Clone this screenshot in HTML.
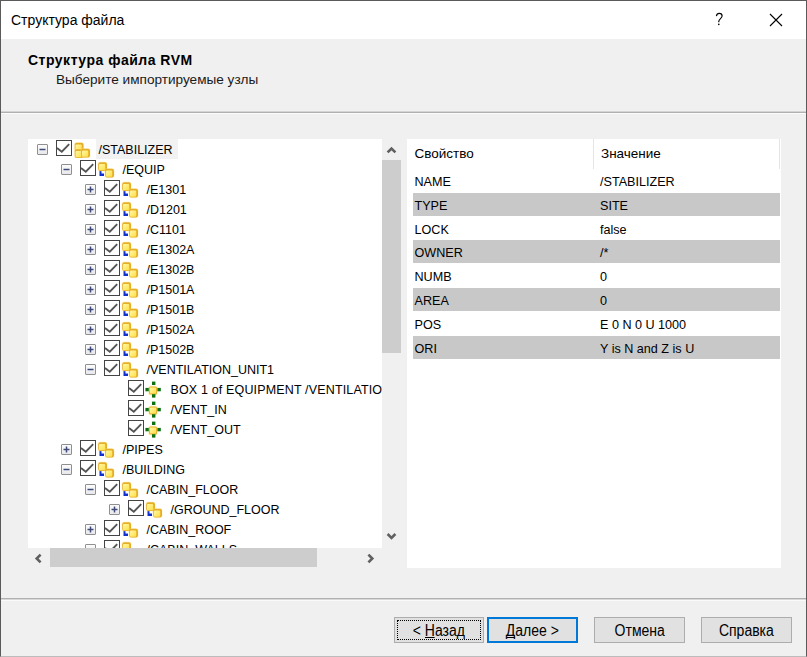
<!DOCTYPE html>
<html><head><meta charset="utf-8"><style>
*{margin:0;padding:0;box-sizing:border-box}
html,body{width:807px;height:657px;overflow:hidden;background:#f0f0f0;font-family:"Liberation Sans",sans-serif;color:#000}
.win{position:absolute;left:0;top:0;width:807px;height:657px;border:1px solid #5a5a5a;border-bottom-color:#bcbcbc;background:#f0f0f0}
.titlebar{position:absolute;left:1px;top:1px;width:805px;height:38px;background:#fff}
.title{position:absolute;left:11px;top:12px;font-size:14px;line-height:17px;color:#000}
.help{position:absolute;left:714px;top:10px;font-size:15px;line-height:18px}
.close{position:absolute;left:769px;top:13px}
.hdr{position:absolute;left:1px;top:39px;width:805px;height:72px;background:#f0f0f0}
.h1{position:absolute;left:28px;top:51.7px;font-size:14px;font-weight:bold;letter-spacing:0.5px;line-height:17px}
.h2{position:absolute;left:56px;top:71px;font-size:13.6px;line-height:17px;color:#1a1a1a}
.sep1{position:absolute;left:1px;top:111px;width:805px;height:2px;background:linear-gradient(#d4d4d4 0 50%,#b0b0b0 50%)}
.sep1b{position:absolute;left:1px;top:113px;width:805px;height:1px;background:#fcfcfc}
.tree{position:absolute;left:28px;top:139px;width:354px;height:409px;background:#fff;overflow:hidden}
.row{position:absolute;left:0;height:20px;width:600px}
.exp{position:absolute;top:5px;width:11px;height:11px;border:1px solid #8f8f8f;border-radius:1px;background:linear-gradient(#fcfcfc,#e8e8ec)}
.exp span{position:absolute;left:1.5px;top:3.75px;width:6px;height:1.5px;background:#3e4b78}
.exp span.pl::after{content:"";position:absolute;left:2.25px;top:-2.25px;width:1.5px;height:6px;background:#3e4b78}
.cb{position:absolute;top:1px;width:16px;height:16px;border:1.6px solid #444;background:#fff}
.cb svg{position:absolute;left:-1.6px;top:-1.6px}
.icw{position:absolute;top:1px;width:18px;height:18px}
.ic{display:block}
.tx{position:absolute;top:0;height:20px;line-height:22px;font-size:12.5px;white-space:nowrap;padding:0 3px;margin-left:-3px}
.tx.sel{background:#f2f2f2;padding-right:5px}
.vsb{position:absolute;left:382px;top:139px;width:25px;height:429px;background:#f0f0f0}
.vthumb{position:absolute;left:0;top:21px;width:19px;height:193px;background:#cdcdcd}
.hsb{position:absolute;left:28px;top:548px;width:354px;height:20px;background:#f0f0f0}
.hthumb{position:absolute;left:22px;top:0;width:267px;height:19px;background:#cdcdcd}
.arr{position:absolute}
.pg{position:absolute;left:407px;top:139px;width:374px;height:429px;background:#fff;overflow:hidden}
.phdr{position:absolute;left:0;top:0;width:374px;height:30px}
.phdr span{position:absolute;top:6px;font-size:13.5px;line-height:17px}
.psep{position:absolute;top:0;width:1px;height:30px;background:#e5e5e5}
.prow{position:absolute;left:6px;width:367px;height:23px;font-size:12.6px;line-height:23px}
.prow.g{background:#c8c8c8}
.prow .k{position:absolute;left:1.5px;top:2px}
.prow .v{position:absolute;left:187px;top:2px}
.sep2{position:absolute;left:1px;top:598px;width:805px;height:2px;background:linear-gradient(#b0b0b0 0 50%,#d8d8d8 50%)}
.sep2b{position:absolute;left:1px;top:600px;width:805px;height:1px;background:#fafafa}
.btn{position:absolute;top:617px;height:26px;border:1px solid #adadad;background:#e1e1e1;font-size:16px;line-height:25px;text-align:center;color:#000}
.btn b{font-weight:normal;display:inline-block;transform:scaleX(0.875)}
.btn.def{border:2px solid #0078d7;line-height:23px}
.focus{position:absolute;left:2px;top:2px;right:2px;bottom:2px;border:1px dotted #000}
u{text-decoration:none;position:relative}
u::after{content:"";position:absolute;left:0.5px;right:0.5px;top:15px;height:1.2px;background:#000}
</style></head><body>
<svg width="0" height="0" style="position:absolute"><defs><linearGradient id="cg" x1="0" y1="0" x2="1" y2="1"><stop offset="0" stop-color="#fff8a8"/><stop offset="1" stop-color="#ffdf45"/></linearGradient></defs></svg>
<div class="win">
</div>
<div class="titlebar"></div>
<div class="title">Структура файла</div>
<svg style="position:absolute;left:712px;top:10px" width="14" height="18" viewBox="0 0 14 18"><path d="M4.4 6.1 C4.7 4.1 5.9 3.4 7.3 3.4 C9 3.4 10.1 4.5 10.1 6.1 C10.1 8.2 6.9 9 6.8 11.3 L6.8 12.3" fill="none" stroke="#000" stroke-width="1.15"/><circle cx="6.8" cy="14.4" r="0.8" fill="#000"/></svg>
<svg class="close" width="14" height="14" viewBox="0 0 14 14" style="position:absolute;left:769px;top:13px"><path d="M1 1 L13 13 M13 1 L1 13" stroke="#000" stroke-width="1.1"/></svg>
<div class="h1">Структура файла RVM</div>
<div class="h2">Выберите импортируемые узлы</div>
<div class="sep1"></div><div class="sep1b"></div>
<div class="tree">
<div class="row" style="top:0px"><div class="exp" style="left:9px"><svg width="9" height="9" viewBox="0 0 9 9" style="position:absolute;left:0;top:0"><path d="M1.5 4.5 H7.5" stroke="#3e4b78" stroke-width="1.5"/></svg></div><div class="cb" style="left:28px"><svg width="16" height="16" viewBox="0 0 16 16"><path d="M2 8.9 L6.8 12.7 L14.2 5.2" fill="none" stroke="#555" stroke-width="1.9"/></svg></div><div class="icw" style="left:45px"><svg class="ic" width="18" height="18" viewBox="0 0 18 18"><g transform="translate(1.5,2.5)"><rect x="-0.6" y="-0.6" width="10.2" height="10.2" rx="3" fill="#ffe680" opacity="0.35"/><path d="M0.2 2.2 Q0.2 0.2 2.2 0.2 L7 0.2 Q9 0.2 9 2.2 L9 7 Q9 9 7 9 L2.2 9 Q0.2 9 0.2 7Z" fill="#e6ae28"/><rect x="1" y="1.9" width="6.2" height="6.3" rx="1" fill="url(#cg)"/></g><g transform="translate(1.5,9)"><rect x="-0.6" y="-0.6" width="10.2" height="10.2" rx="3" fill="#ffe680" opacity="0.35"/><path d="M0.2 2.2 Q0.2 0.2 2.2 0.2 L7 0.2 Q9 0.2 9 2.2 L9 7 Q9 9 7 9 L2.2 9 Q0.2 9 0.2 7Z" fill="#e6ae28"/><rect x="1" y="1.9" width="6.2" height="6.3" rx="1" fill="url(#cg)"/></g><g transform="translate(8,8.5)"><rect x="-0.6" y="-0.6" width="10.2" height="10.2" rx="3" fill="#ffe680" opacity="0.35"/><path d="M0.2 2.2 Q0.2 0.2 2.2 0.2 L7 0.2 Q9 0.2 9 2.2 L9 7 Q9 9 7 9 L2.2 9 Q0.2 9 0.2 7Z" fill="#e6ae28"/><rect x="1" y="1.9" width="6.2" height="6.3" rx="1" fill="url(#cg)"/></g></svg></div><div class="tx sel" style="left:70.5px">/STABILIZER</div></div><div class="row" style="top:20px"><div class="exp" style="left:33px"><svg width="9" height="9" viewBox="0 0 9 9" style="position:absolute;left:0;top:0"><path d="M1.5 4.5 H7.5" stroke="#3e4b78" stroke-width="1.5"/></svg></div><div class="cb" style="left:52px"><svg width="16" height="16" viewBox="0 0 16 16"><path d="M2 8.9 L6.8 12.7 L14.2 5.2" fill="none" stroke="#555" stroke-width="1.9"/></svg></div><div class="icw" style="left:69px"><svg class="ic" width="18" height="18" viewBox="0 0 18 18"><path d="M2.5 10.5 h2 v3 h2.5 v2.5 h-4.5z" fill="#1030d0"/><g transform="translate(1,2)"><rect x="-0.6" y="-0.6" width="10.2" height="10.2" rx="3" fill="#ffe680" opacity="0.35"/><path d="M0.2 2.2 Q0.2 0.2 2.2 0.2 L7 0.2 Q9 0.2 9 2.2 L9 7 Q9 9 7 9 L2.2 9 Q0.2 9 0.2 7Z" fill="#e6ae28"/><rect x="1" y="1.9" width="6.2" height="6.3" rx="1" fill="url(#cg)"/></g><g transform="translate(8,8.5)"><rect x="-0.6" y="-0.6" width="10.2" height="10.2" rx="3" fill="#ffe680" opacity="0.35"/><path d="M0.2 2.2 Q0.2 0.2 2.2 0.2 L7 0.2 Q9 0.2 9 2.2 L9 7 Q9 9 7 9 L2.2 9 Q0.2 9 0.2 7Z" fill="#e6ae28"/><rect x="1" y="1.9" width="6.2" height="6.3" rx="1" fill="url(#cg)"/></g></svg></div><div class="tx" style="left:94.5px">/EQUIP</div></div><div class="row" style="top:40px"><div class="exp" style="left:57px"><svg width="9" height="9" viewBox="0 0 9 9" style="position:absolute;left:0;top:0"><path d="M1.5 4.5 H7.5" stroke="#3e4b78" stroke-width="1.5"/><path d="M4.5 1.5 V7.5" stroke="#3e4b78" stroke-width="1.5"/></svg></div><div class="cb" style="left:76px"><svg width="16" height="16" viewBox="0 0 16 16"><path d="M2 8.9 L6.8 12.7 L14.2 5.2" fill="none" stroke="#555" stroke-width="1.9"/></svg></div><div class="icw" style="left:93px"><svg class="ic" width="18" height="18" viewBox="0 0 18 18"><path d="M2.5 10.5 h2 v3 h2.5 v2.5 h-4.5z" fill="#1030d0"/><g transform="translate(1,2)"><rect x="-0.6" y="-0.6" width="10.2" height="10.2" rx="3" fill="#ffe680" opacity="0.35"/><path d="M0.2 2.2 Q0.2 0.2 2.2 0.2 L7 0.2 Q9 0.2 9 2.2 L9 7 Q9 9 7 9 L2.2 9 Q0.2 9 0.2 7Z" fill="#e6ae28"/><rect x="1" y="1.9" width="6.2" height="6.3" rx="1" fill="url(#cg)"/></g><g transform="translate(8,8.5)"><rect x="-0.6" y="-0.6" width="10.2" height="10.2" rx="3" fill="#ffe680" opacity="0.35"/><path d="M0.2 2.2 Q0.2 0.2 2.2 0.2 L7 0.2 Q9 0.2 9 2.2 L9 7 Q9 9 7 9 L2.2 9 Q0.2 9 0.2 7Z" fill="#e6ae28"/><rect x="1" y="1.9" width="6.2" height="6.3" rx="1" fill="url(#cg)"/></g></svg></div><div class="tx" style="left:118.5px">/E1301</div></div><div class="row" style="top:60px"><div class="exp" style="left:57px"><svg width="9" height="9" viewBox="0 0 9 9" style="position:absolute;left:0;top:0"><path d="M1.5 4.5 H7.5" stroke="#3e4b78" stroke-width="1.5"/><path d="M4.5 1.5 V7.5" stroke="#3e4b78" stroke-width="1.5"/></svg></div><div class="cb" style="left:76px"><svg width="16" height="16" viewBox="0 0 16 16"><path d="M2 8.9 L6.8 12.7 L14.2 5.2" fill="none" stroke="#555" stroke-width="1.9"/></svg></div><div class="icw" style="left:93px"><svg class="ic" width="18" height="18" viewBox="0 0 18 18"><path d="M2.5 10.5 h2 v3 h2.5 v2.5 h-4.5z" fill="#1030d0"/><g transform="translate(1,2)"><rect x="-0.6" y="-0.6" width="10.2" height="10.2" rx="3" fill="#ffe680" opacity="0.35"/><path d="M0.2 2.2 Q0.2 0.2 2.2 0.2 L7 0.2 Q9 0.2 9 2.2 L9 7 Q9 9 7 9 L2.2 9 Q0.2 9 0.2 7Z" fill="#e6ae28"/><rect x="1" y="1.9" width="6.2" height="6.3" rx="1" fill="url(#cg)"/></g><g transform="translate(8,8.5)"><rect x="-0.6" y="-0.6" width="10.2" height="10.2" rx="3" fill="#ffe680" opacity="0.35"/><path d="M0.2 2.2 Q0.2 0.2 2.2 0.2 L7 0.2 Q9 0.2 9 2.2 L9 7 Q9 9 7 9 L2.2 9 Q0.2 9 0.2 7Z" fill="#e6ae28"/><rect x="1" y="1.9" width="6.2" height="6.3" rx="1" fill="url(#cg)"/></g></svg></div><div class="tx" style="left:118.5px">/D1201</div></div><div class="row" style="top:80px"><div class="exp" style="left:57px"><svg width="9" height="9" viewBox="0 0 9 9" style="position:absolute;left:0;top:0"><path d="M1.5 4.5 H7.5" stroke="#3e4b78" stroke-width="1.5"/><path d="M4.5 1.5 V7.5" stroke="#3e4b78" stroke-width="1.5"/></svg></div><div class="cb" style="left:76px"><svg width="16" height="16" viewBox="0 0 16 16"><path d="M2 8.9 L6.8 12.7 L14.2 5.2" fill="none" stroke="#555" stroke-width="1.9"/></svg></div><div class="icw" style="left:93px"><svg class="ic" width="18" height="18" viewBox="0 0 18 18"><path d="M2.5 10.5 h2 v3 h2.5 v2.5 h-4.5z" fill="#1030d0"/><g transform="translate(1,2)"><rect x="-0.6" y="-0.6" width="10.2" height="10.2" rx="3" fill="#ffe680" opacity="0.35"/><path d="M0.2 2.2 Q0.2 0.2 2.2 0.2 L7 0.2 Q9 0.2 9 2.2 L9 7 Q9 9 7 9 L2.2 9 Q0.2 9 0.2 7Z" fill="#e6ae28"/><rect x="1" y="1.9" width="6.2" height="6.3" rx="1" fill="url(#cg)"/></g><g transform="translate(8,8.5)"><rect x="-0.6" y="-0.6" width="10.2" height="10.2" rx="3" fill="#ffe680" opacity="0.35"/><path d="M0.2 2.2 Q0.2 0.2 2.2 0.2 L7 0.2 Q9 0.2 9 2.2 L9 7 Q9 9 7 9 L2.2 9 Q0.2 9 0.2 7Z" fill="#e6ae28"/><rect x="1" y="1.9" width="6.2" height="6.3" rx="1" fill="url(#cg)"/></g></svg></div><div class="tx" style="left:118.5px">/C1101</div></div><div class="row" style="top:100px"><div class="exp" style="left:57px"><svg width="9" height="9" viewBox="0 0 9 9" style="position:absolute;left:0;top:0"><path d="M1.5 4.5 H7.5" stroke="#3e4b78" stroke-width="1.5"/><path d="M4.5 1.5 V7.5" stroke="#3e4b78" stroke-width="1.5"/></svg></div><div class="cb" style="left:76px"><svg width="16" height="16" viewBox="0 0 16 16"><path d="M2 8.9 L6.8 12.7 L14.2 5.2" fill="none" stroke="#555" stroke-width="1.9"/></svg></div><div class="icw" style="left:93px"><svg class="ic" width="18" height="18" viewBox="0 0 18 18"><path d="M2.5 10.5 h2 v3 h2.5 v2.5 h-4.5z" fill="#1030d0"/><g transform="translate(1,2)"><rect x="-0.6" y="-0.6" width="10.2" height="10.2" rx="3" fill="#ffe680" opacity="0.35"/><path d="M0.2 2.2 Q0.2 0.2 2.2 0.2 L7 0.2 Q9 0.2 9 2.2 L9 7 Q9 9 7 9 L2.2 9 Q0.2 9 0.2 7Z" fill="#e6ae28"/><rect x="1" y="1.9" width="6.2" height="6.3" rx="1" fill="url(#cg)"/></g><g transform="translate(8,8.5)"><rect x="-0.6" y="-0.6" width="10.2" height="10.2" rx="3" fill="#ffe680" opacity="0.35"/><path d="M0.2 2.2 Q0.2 0.2 2.2 0.2 L7 0.2 Q9 0.2 9 2.2 L9 7 Q9 9 7 9 L2.2 9 Q0.2 9 0.2 7Z" fill="#e6ae28"/><rect x="1" y="1.9" width="6.2" height="6.3" rx="1" fill="url(#cg)"/></g></svg></div><div class="tx" style="left:118.5px">/E1302A</div></div><div class="row" style="top:120px"><div class="exp" style="left:57px"><svg width="9" height="9" viewBox="0 0 9 9" style="position:absolute;left:0;top:0"><path d="M1.5 4.5 H7.5" stroke="#3e4b78" stroke-width="1.5"/><path d="M4.5 1.5 V7.5" stroke="#3e4b78" stroke-width="1.5"/></svg></div><div class="cb" style="left:76px"><svg width="16" height="16" viewBox="0 0 16 16"><path d="M2 8.9 L6.8 12.7 L14.2 5.2" fill="none" stroke="#555" stroke-width="1.9"/></svg></div><div class="icw" style="left:93px"><svg class="ic" width="18" height="18" viewBox="0 0 18 18"><path d="M2.5 10.5 h2 v3 h2.5 v2.5 h-4.5z" fill="#1030d0"/><g transform="translate(1,2)"><rect x="-0.6" y="-0.6" width="10.2" height="10.2" rx="3" fill="#ffe680" opacity="0.35"/><path d="M0.2 2.2 Q0.2 0.2 2.2 0.2 L7 0.2 Q9 0.2 9 2.2 L9 7 Q9 9 7 9 L2.2 9 Q0.2 9 0.2 7Z" fill="#e6ae28"/><rect x="1" y="1.9" width="6.2" height="6.3" rx="1" fill="url(#cg)"/></g><g transform="translate(8,8.5)"><rect x="-0.6" y="-0.6" width="10.2" height="10.2" rx="3" fill="#ffe680" opacity="0.35"/><path d="M0.2 2.2 Q0.2 0.2 2.2 0.2 L7 0.2 Q9 0.2 9 2.2 L9 7 Q9 9 7 9 L2.2 9 Q0.2 9 0.2 7Z" fill="#e6ae28"/><rect x="1" y="1.9" width="6.2" height="6.3" rx="1" fill="url(#cg)"/></g></svg></div><div class="tx" style="left:118.5px">/E1302B</div></div><div class="row" style="top:140px"><div class="exp" style="left:57px"><svg width="9" height="9" viewBox="0 0 9 9" style="position:absolute;left:0;top:0"><path d="M1.5 4.5 H7.5" stroke="#3e4b78" stroke-width="1.5"/><path d="M4.5 1.5 V7.5" stroke="#3e4b78" stroke-width="1.5"/></svg></div><div class="cb" style="left:76px"><svg width="16" height="16" viewBox="0 0 16 16"><path d="M2 8.9 L6.8 12.7 L14.2 5.2" fill="none" stroke="#555" stroke-width="1.9"/></svg></div><div class="icw" style="left:93px"><svg class="ic" width="18" height="18" viewBox="0 0 18 18"><path d="M2.5 10.5 h2 v3 h2.5 v2.5 h-4.5z" fill="#1030d0"/><g transform="translate(1,2)"><rect x="-0.6" y="-0.6" width="10.2" height="10.2" rx="3" fill="#ffe680" opacity="0.35"/><path d="M0.2 2.2 Q0.2 0.2 2.2 0.2 L7 0.2 Q9 0.2 9 2.2 L9 7 Q9 9 7 9 L2.2 9 Q0.2 9 0.2 7Z" fill="#e6ae28"/><rect x="1" y="1.9" width="6.2" height="6.3" rx="1" fill="url(#cg)"/></g><g transform="translate(8,8.5)"><rect x="-0.6" y="-0.6" width="10.2" height="10.2" rx="3" fill="#ffe680" opacity="0.35"/><path d="M0.2 2.2 Q0.2 0.2 2.2 0.2 L7 0.2 Q9 0.2 9 2.2 L9 7 Q9 9 7 9 L2.2 9 Q0.2 9 0.2 7Z" fill="#e6ae28"/><rect x="1" y="1.9" width="6.2" height="6.3" rx="1" fill="url(#cg)"/></g></svg></div><div class="tx" style="left:118.5px">/P1501A</div></div><div class="row" style="top:160px"><div class="exp" style="left:57px"><svg width="9" height="9" viewBox="0 0 9 9" style="position:absolute;left:0;top:0"><path d="M1.5 4.5 H7.5" stroke="#3e4b78" stroke-width="1.5"/><path d="M4.5 1.5 V7.5" stroke="#3e4b78" stroke-width="1.5"/></svg></div><div class="cb" style="left:76px"><svg width="16" height="16" viewBox="0 0 16 16"><path d="M2 8.9 L6.8 12.7 L14.2 5.2" fill="none" stroke="#555" stroke-width="1.9"/></svg></div><div class="icw" style="left:93px"><svg class="ic" width="18" height="18" viewBox="0 0 18 18"><path d="M2.5 10.5 h2 v3 h2.5 v2.5 h-4.5z" fill="#1030d0"/><g transform="translate(1,2)"><rect x="-0.6" y="-0.6" width="10.2" height="10.2" rx="3" fill="#ffe680" opacity="0.35"/><path d="M0.2 2.2 Q0.2 0.2 2.2 0.2 L7 0.2 Q9 0.2 9 2.2 L9 7 Q9 9 7 9 L2.2 9 Q0.2 9 0.2 7Z" fill="#e6ae28"/><rect x="1" y="1.9" width="6.2" height="6.3" rx="1" fill="url(#cg)"/></g><g transform="translate(8,8.5)"><rect x="-0.6" y="-0.6" width="10.2" height="10.2" rx="3" fill="#ffe680" opacity="0.35"/><path d="M0.2 2.2 Q0.2 0.2 2.2 0.2 L7 0.2 Q9 0.2 9 2.2 L9 7 Q9 9 7 9 L2.2 9 Q0.2 9 0.2 7Z" fill="#e6ae28"/><rect x="1" y="1.9" width="6.2" height="6.3" rx="1" fill="url(#cg)"/></g></svg></div><div class="tx" style="left:118.5px">/P1501B</div></div><div class="row" style="top:180px"><div class="exp" style="left:57px"><svg width="9" height="9" viewBox="0 0 9 9" style="position:absolute;left:0;top:0"><path d="M1.5 4.5 H7.5" stroke="#3e4b78" stroke-width="1.5"/><path d="M4.5 1.5 V7.5" stroke="#3e4b78" stroke-width="1.5"/></svg></div><div class="cb" style="left:76px"><svg width="16" height="16" viewBox="0 0 16 16"><path d="M2 8.9 L6.8 12.7 L14.2 5.2" fill="none" stroke="#555" stroke-width="1.9"/></svg></div><div class="icw" style="left:93px"><svg class="ic" width="18" height="18" viewBox="0 0 18 18"><path d="M2.5 10.5 h2 v3 h2.5 v2.5 h-4.5z" fill="#1030d0"/><g transform="translate(1,2)"><rect x="-0.6" y="-0.6" width="10.2" height="10.2" rx="3" fill="#ffe680" opacity="0.35"/><path d="M0.2 2.2 Q0.2 0.2 2.2 0.2 L7 0.2 Q9 0.2 9 2.2 L9 7 Q9 9 7 9 L2.2 9 Q0.2 9 0.2 7Z" fill="#e6ae28"/><rect x="1" y="1.9" width="6.2" height="6.3" rx="1" fill="url(#cg)"/></g><g transform="translate(8,8.5)"><rect x="-0.6" y="-0.6" width="10.2" height="10.2" rx="3" fill="#ffe680" opacity="0.35"/><path d="M0.2 2.2 Q0.2 0.2 2.2 0.2 L7 0.2 Q9 0.2 9 2.2 L9 7 Q9 9 7 9 L2.2 9 Q0.2 9 0.2 7Z" fill="#e6ae28"/><rect x="1" y="1.9" width="6.2" height="6.3" rx="1" fill="url(#cg)"/></g></svg></div><div class="tx" style="left:118.5px">/P1502A</div></div><div class="row" style="top:200px"><div class="exp" style="left:57px"><svg width="9" height="9" viewBox="0 0 9 9" style="position:absolute;left:0;top:0"><path d="M1.5 4.5 H7.5" stroke="#3e4b78" stroke-width="1.5"/><path d="M4.5 1.5 V7.5" stroke="#3e4b78" stroke-width="1.5"/></svg></div><div class="cb" style="left:76px"><svg width="16" height="16" viewBox="0 0 16 16"><path d="M2 8.9 L6.8 12.7 L14.2 5.2" fill="none" stroke="#555" stroke-width="1.9"/></svg></div><div class="icw" style="left:93px"><svg class="ic" width="18" height="18" viewBox="0 0 18 18"><path d="M2.5 10.5 h2 v3 h2.5 v2.5 h-4.5z" fill="#1030d0"/><g transform="translate(1,2)"><rect x="-0.6" y="-0.6" width="10.2" height="10.2" rx="3" fill="#ffe680" opacity="0.35"/><path d="M0.2 2.2 Q0.2 0.2 2.2 0.2 L7 0.2 Q9 0.2 9 2.2 L9 7 Q9 9 7 9 L2.2 9 Q0.2 9 0.2 7Z" fill="#e6ae28"/><rect x="1" y="1.9" width="6.2" height="6.3" rx="1" fill="url(#cg)"/></g><g transform="translate(8,8.5)"><rect x="-0.6" y="-0.6" width="10.2" height="10.2" rx="3" fill="#ffe680" opacity="0.35"/><path d="M0.2 2.2 Q0.2 0.2 2.2 0.2 L7 0.2 Q9 0.2 9 2.2 L9 7 Q9 9 7 9 L2.2 9 Q0.2 9 0.2 7Z" fill="#e6ae28"/><rect x="1" y="1.9" width="6.2" height="6.3" rx="1" fill="url(#cg)"/></g></svg></div><div class="tx" style="left:118.5px">/P1502B</div></div><div class="row" style="top:220px"><div class="exp" style="left:57px"><svg width="9" height="9" viewBox="0 0 9 9" style="position:absolute;left:0;top:0"><path d="M1.5 4.5 H7.5" stroke="#3e4b78" stroke-width="1.5"/></svg></div><div class="cb" style="left:76px"><svg width="16" height="16" viewBox="0 0 16 16"><path d="M2 8.9 L6.8 12.7 L14.2 5.2" fill="none" stroke="#555" stroke-width="1.9"/></svg></div><div class="icw" style="left:93px"><svg class="ic" width="18" height="18" viewBox="0 0 18 18"><path d="M2.5 10.5 h2 v3 h2.5 v2.5 h-4.5z" fill="#1030d0"/><g transform="translate(1,2)"><rect x="-0.6" y="-0.6" width="10.2" height="10.2" rx="3" fill="#ffe680" opacity="0.35"/><path d="M0.2 2.2 Q0.2 0.2 2.2 0.2 L7 0.2 Q9 0.2 9 2.2 L9 7 Q9 9 7 9 L2.2 9 Q0.2 9 0.2 7Z" fill="#e6ae28"/><rect x="1" y="1.9" width="6.2" height="6.3" rx="1" fill="url(#cg)"/></g><g transform="translate(8,8.5)"><rect x="-0.6" y="-0.6" width="10.2" height="10.2" rx="3" fill="#ffe680" opacity="0.35"/><path d="M0.2 2.2 Q0.2 0.2 2.2 0.2 L7 0.2 Q9 0.2 9 2.2 L9 7 Q9 9 7 9 L2.2 9 Q0.2 9 0.2 7Z" fill="#e6ae28"/><rect x="1" y="1.9" width="6.2" height="6.3" rx="1" fill="url(#cg)"/></g></svg></div><div class="tx" style="left:118.5px">/VENTILATION_UNIT1</div></div><div class="row" style="top:240px"><div class="cb" style="left:100px"><svg width="16" height="16" viewBox="0 0 16 16"><path d="M2 8.9 L6.8 12.7 L14.2 5.2" fill="none" stroke="#555" stroke-width="1.9"/></svg></div><div class="icw" style="left:117px"><svg class="ic" width="18" height="18" viewBox="0 0 18 18"><rect x="3" y="5.5" width="10" height="10" rx="3" fill="#ffe680" opacity="0.4"/><rect x="4" y="6.5" width="8" height="8" rx="1.5" fill="#e6b02c"/><rect x="4.9" y="7.4" width="6.2" height="6.2" rx="1" fill="url(#cg)"/><rect x="7" y="1.6" width="3.4" height="3.4" fill="#0a7010"/><rect x="0.4" y="7.9" width="3.4" height="3.4" fill="#0a7010"/><rect x="12.4" y="7.9" width="3.4" height="3.4" fill="#0a7010"/><rect x="7" y="14.2" width="3.4" height="3.4" fill="#0a7010"/></svg></div><div class="tx" style="left:142.5px;letter-spacing:0.15px">BOX 1 of EQUIPMENT /VENTILATIO</div></div><div class="row" style="top:260px"><div class="cb" style="left:100px"><svg width="16" height="16" viewBox="0 0 16 16"><path d="M2 8.9 L6.8 12.7 L14.2 5.2" fill="none" stroke="#555" stroke-width="1.9"/></svg></div><div class="icw" style="left:117px"><svg class="ic" width="18" height="18" viewBox="0 0 18 18"><rect x="3" y="5.5" width="10" height="10" rx="3" fill="#ffe680" opacity="0.4"/><rect x="4" y="6.5" width="8" height="8" rx="1.5" fill="#e6b02c"/><rect x="4.9" y="7.4" width="6.2" height="6.2" rx="1" fill="url(#cg)"/><rect x="7" y="1.6" width="3.4" height="3.4" fill="#0a7010"/><rect x="0.4" y="7.9" width="3.4" height="3.4" fill="#0a7010"/><rect x="12.4" y="7.9" width="3.4" height="3.4" fill="#0a7010"/><rect x="7" y="14.2" width="3.4" height="3.4" fill="#0a7010"/></svg></div><div class="tx" style="left:142.5px">/VENT_IN</div></div><div class="row" style="top:280px"><div class="cb" style="left:100px"><svg width="16" height="16" viewBox="0 0 16 16"><path d="M2 8.9 L6.8 12.7 L14.2 5.2" fill="none" stroke="#555" stroke-width="1.9"/></svg></div><div class="icw" style="left:117px"><svg class="ic" width="18" height="18" viewBox="0 0 18 18"><rect x="3" y="5.5" width="10" height="10" rx="3" fill="#ffe680" opacity="0.4"/><rect x="4" y="6.5" width="8" height="8" rx="1.5" fill="#e6b02c"/><rect x="4.9" y="7.4" width="6.2" height="6.2" rx="1" fill="url(#cg)"/><rect x="7" y="1.6" width="3.4" height="3.4" fill="#0a7010"/><rect x="0.4" y="7.9" width="3.4" height="3.4" fill="#0a7010"/><rect x="12.4" y="7.9" width="3.4" height="3.4" fill="#0a7010"/><rect x="7" y="14.2" width="3.4" height="3.4" fill="#0a7010"/></svg></div><div class="tx" style="left:142.5px">/VENT_OUT</div></div><div class="row" style="top:300px"><div class="exp" style="left:33px"><svg width="9" height="9" viewBox="0 0 9 9" style="position:absolute;left:0;top:0"><path d="M1.5 4.5 H7.5" stroke="#3e4b78" stroke-width="1.5"/><path d="M4.5 1.5 V7.5" stroke="#3e4b78" stroke-width="1.5"/></svg></div><div class="cb" style="left:52px"><svg width="16" height="16" viewBox="0 0 16 16"><path d="M2 8.9 L6.8 12.7 L14.2 5.2" fill="none" stroke="#555" stroke-width="1.9"/></svg></div><div class="icw" style="left:69px"><svg class="ic" width="18" height="18" viewBox="0 0 18 18"><path d="M2.5 10.5 h2 v3 h2.5 v2.5 h-4.5z" fill="#1030d0"/><g transform="translate(1,2)"><rect x="-0.6" y="-0.6" width="10.2" height="10.2" rx="3" fill="#ffe680" opacity="0.35"/><path d="M0.2 2.2 Q0.2 0.2 2.2 0.2 L7 0.2 Q9 0.2 9 2.2 L9 7 Q9 9 7 9 L2.2 9 Q0.2 9 0.2 7Z" fill="#e6ae28"/><rect x="1" y="1.9" width="6.2" height="6.3" rx="1" fill="url(#cg)"/></g><g transform="translate(8,8.5)"><rect x="-0.6" y="-0.6" width="10.2" height="10.2" rx="3" fill="#ffe680" opacity="0.35"/><path d="M0.2 2.2 Q0.2 0.2 2.2 0.2 L7 0.2 Q9 0.2 9 2.2 L9 7 Q9 9 7 9 L2.2 9 Q0.2 9 0.2 7Z" fill="#e6ae28"/><rect x="1" y="1.9" width="6.2" height="6.3" rx="1" fill="url(#cg)"/></g></svg></div><div class="tx" style="left:94.5px">/PIPES</div></div><div class="row" style="top:320px"><div class="exp" style="left:33px"><svg width="9" height="9" viewBox="0 0 9 9" style="position:absolute;left:0;top:0"><path d="M1.5 4.5 H7.5" stroke="#3e4b78" stroke-width="1.5"/></svg></div><div class="cb" style="left:52px"><svg width="16" height="16" viewBox="0 0 16 16"><path d="M2 8.9 L6.8 12.7 L14.2 5.2" fill="none" stroke="#555" stroke-width="1.9"/></svg></div><div class="icw" style="left:69px"><svg class="ic" width="18" height="18" viewBox="0 0 18 18"><path d="M2.5 10.5 h2 v3 h2.5 v2.5 h-4.5z" fill="#1030d0"/><g transform="translate(1,2)"><rect x="-0.6" y="-0.6" width="10.2" height="10.2" rx="3" fill="#ffe680" opacity="0.35"/><path d="M0.2 2.2 Q0.2 0.2 2.2 0.2 L7 0.2 Q9 0.2 9 2.2 L9 7 Q9 9 7 9 L2.2 9 Q0.2 9 0.2 7Z" fill="#e6ae28"/><rect x="1" y="1.9" width="6.2" height="6.3" rx="1" fill="url(#cg)"/></g><g transform="translate(8,8.5)"><rect x="-0.6" y="-0.6" width="10.2" height="10.2" rx="3" fill="#ffe680" opacity="0.35"/><path d="M0.2 2.2 Q0.2 0.2 2.2 0.2 L7 0.2 Q9 0.2 9 2.2 L9 7 Q9 9 7 9 L2.2 9 Q0.2 9 0.2 7Z" fill="#e6ae28"/><rect x="1" y="1.9" width="6.2" height="6.3" rx="1" fill="url(#cg)"/></g></svg></div><div class="tx" style="left:94.5px">/BUILDING</div></div><div class="row" style="top:340px"><div class="exp" style="left:57px"><svg width="9" height="9" viewBox="0 0 9 9" style="position:absolute;left:0;top:0"><path d="M1.5 4.5 H7.5" stroke="#3e4b78" stroke-width="1.5"/></svg></div><div class="cb" style="left:76px"><svg width="16" height="16" viewBox="0 0 16 16"><path d="M2 8.9 L6.8 12.7 L14.2 5.2" fill="none" stroke="#555" stroke-width="1.9"/></svg></div><div class="icw" style="left:93px"><svg class="ic" width="18" height="18" viewBox="0 0 18 18"><path d="M2.5 10.5 h2 v3 h2.5 v2.5 h-4.5z" fill="#1030d0"/><g transform="translate(1,2)"><rect x="-0.6" y="-0.6" width="10.2" height="10.2" rx="3" fill="#ffe680" opacity="0.35"/><path d="M0.2 2.2 Q0.2 0.2 2.2 0.2 L7 0.2 Q9 0.2 9 2.2 L9 7 Q9 9 7 9 L2.2 9 Q0.2 9 0.2 7Z" fill="#e6ae28"/><rect x="1" y="1.9" width="6.2" height="6.3" rx="1" fill="url(#cg)"/></g><g transform="translate(8,8.5)"><rect x="-0.6" y="-0.6" width="10.2" height="10.2" rx="3" fill="#ffe680" opacity="0.35"/><path d="M0.2 2.2 Q0.2 0.2 2.2 0.2 L7 0.2 Q9 0.2 9 2.2 L9 7 Q9 9 7 9 L2.2 9 Q0.2 9 0.2 7Z" fill="#e6ae28"/><rect x="1" y="1.9" width="6.2" height="6.3" rx="1" fill="url(#cg)"/></g></svg></div><div class="tx" style="left:118.5px">/CABIN_FLOOR</div></div><div class="row" style="top:360px"><div class="exp" style="left:81px"><svg width="9" height="9" viewBox="0 0 9 9" style="position:absolute;left:0;top:0"><path d="M1.5 4.5 H7.5" stroke="#3e4b78" stroke-width="1.5"/><path d="M4.5 1.5 V7.5" stroke="#3e4b78" stroke-width="1.5"/></svg></div><div class="cb" style="left:100px"><svg width="16" height="16" viewBox="0 0 16 16"><path d="M2 8.9 L6.8 12.7 L14.2 5.2" fill="none" stroke="#555" stroke-width="1.9"/></svg></div><div class="icw" style="left:117px"><svg class="ic" width="18" height="18" viewBox="0 0 18 18"><path d="M2.5 10.5 h2 v3 h2.5 v2.5 h-4.5z" fill="#1030d0"/><g transform="translate(1,2)"><rect x="-0.6" y="-0.6" width="10.2" height="10.2" rx="3" fill="#ffe680" opacity="0.35"/><path d="M0.2 2.2 Q0.2 0.2 2.2 0.2 L7 0.2 Q9 0.2 9 2.2 L9 7 Q9 9 7 9 L2.2 9 Q0.2 9 0.2 7Z" fill="#e6ae28"/><rect x="1" y="1.9" width="6.2" height="6.3" rx="1" fill="url(#cg)"/></g><g transform="translate(8,8.5)"><rect x="-0.6" y="-0.6" width="10.2" height="10.2" rx="3" fill="#ffe680" opacity="0.35"/><path d="M0.2 2.2 Q0.2 0.2 2.2 0.2 L7 0.2 Q9 0.2 9 2.2 L9 7 Q9 9 7 9 L2.2 9 Q0.2 9 0.2 7Z" fill="#e6ae28"/><rect x="1" y="1.9" width="6.2" height="6.3" rx="1" fill="url(#cg)"/></g></svg></div><div class="tx" style="left:142.5px">/GROUND_FLOOR</div></div><div class="row" style="top:380px"><div class="exp" style="left:57px"><svg width="9" height="9" viewBox="0 0 9 9" style="position:absolute;left:0;top:0"><path d="M1.5 4.5 H7.5" stroke="#3e4b78" stroke-width="1.5"/><path d="M4.5 1.5 V7.5" stroke="#3e4b78" stroke-width="1.5"/></svg></div><div class="cb" style="left:76px"><svg width="16" height="16" viewBox="0 0 16 16"><path d="M2 8.9 L6.8 12.7 L14.2 5.2" fill="none" stroke="#555" stroke-width="1.9"/></svg></div><div class="icw" style="left:93px"><svg class="ic" width="18" height="18" viewBox="0 0 18 18"><path d="M2.5 10.5 h2 v3 h2.5 v2.5 h-4.5z" fill="#1030d0"/><g transform="translate(1,2)"><rect x="-0.6" y="-0.6" width="10.2" height="10.2" rx="3" fill="#ffe680" opacity="0.35"/><path d="M0.2 2.2 Q0.2 0.2 2.2 0.2 L7 0.2 Q9 0.2 9 2.2 L9 7 Q9 9 7 9 L2.2 9 Q0.2 9 0.2 7Z" fill="#e6ae28"/><rect x="1" y="1.9" width="6.2" height="6.3" rx="1" fill="url(#cg)"/></g><g transform="translate(8,8.5)"><rect x="-0.6" y="-0.6" width="10.2" height="10.2" rx="3" fill="#ffe680" opacity="0.35"/><path d="M0.2 2.2 Q0.2 0.2 2.2 0.2 L7 0.2 Q9 0.2 9 2.2 L9 7 Q9 9 7 9 L2.2 9 Q0.2 9 0.2 7Z" fill="#e6ae28"/><rect x="1" y="1.9" width="6.2" height="6.3" rx="1" fill="url(#cg)"/></g></svg></div><div class="tx" style="left:118.5px">/CABIN_ROOF</div></div><div class="row" style="top:400px"><div class="exp" style="left:57px"><svg width="9" height="9" viewBox="0 0 9 9" style="position:absolute;left:0;top:0"><path d="M1.5 4.5 H7.5" stroke="#3e4b78" stroke-width="1.5"/></svg></div><div class="cb" style="left:76px"><svg width="16" height="16" viewBox="0 0 16 16"><path d="M2 8.9 L6.8 12.7 L14.2 5.2" fill="none" stroke="#555" stroke-width="1.9"/></svg></div><div class="icw" style="left:93px"><svg class="ic" width="18" height="18" viewBox="0 0 18 18"><path d="M2.5 10.5 h2 v3 h2.5 v2.5 h-4.5z" fill="#1030d0"/><g transform="translate(1,2)"><rect x="-0.6" y="-0.6" width="10.2" height="10.2" rx="3" fill="#ffe680" opacity="0.35"/><path d="M0.2 2.2 Q0.2 0.2 2.2 0.2 L7 0.2 Q9 0.2 9 2.2 L9 7 Q9 9 7 9 L2.2 9 Q0.2 9 0.2 7Z" fill="#e6ae28"/><rect x="1" y="1.9" width="6.2" height="6.3" rx="1" fill="url(#cg)"/></g><g transform="translate(8,8.5)"><rect x="-0.6" y="-0.6" width="10.2" height="10.2" rx="3" fill="#ffe680" opacity="0.35"/><path d="M0.2 2.2 Q0.2 0.2 2.2 0.2 L7 0.2 Q9 0.2 9 2.2 L9 7 Q9 9 7 9 L2.2 9 Q0.2 9 0.2 7Z" fill="#e6ae28"/><rect x="1" y="1.9" width="6.2" height="6.3" rx="1" fill="url(#cg)"/></g></svg></div><div class="tx" style="left:118.5px">/CABIN_WALLS</div></div>
</div>
<div class="vsb"><div class="vthumb"></div>
<svg class="arr" style="left:4px;top:6px" width="11" height="9" viewBox="0 0 11 9"><path d="M1.6 7.4 L5.5 3.5 L9.4 7.4" fill="none" stroke="#606060" stroke-width="2.6"/></svg>
<svg class="arr" style="left:4px;top:393px" width="11" height="9" viewBox="0 0 11 9"><path d="M1.6 2 L5.5 5.9 L9.4 2" fill="none" stroke="#606060" stroke-width="2.6"/></svg>
</div>
<div class="hsb"><div class="hthumb"></div>
<svg class="arr" style="left:6px;top:4.5px" width="9" height="11" viewBox="0 0 9 11"><path d="M6.6 1.6 L2.7 5.5 L6.6 9.4" fill="none" stroke="#606060" stroke-width="2.6"/></svg>
<svg class="arr" style="left:338px;top:4.5px" width="9" height="11" viewBox="0 0 9 11"><path d="M2.4 1.6 L6.3 5.5 L2.4 9.4" fill="none" stroke="#606060" stroke-width="2.6"/></svg>
</div>
<div class="pg">
<div class="phdr"><span style="left:7.5px">Свойство</span><span style="left:194px">Значение</span><div class="psep" style="left:186px"></div><div class="psep" style="left:372px"></div></div>
<div class="prow" style="top:30.00px"><span class="k">NAME</span><span class="v">/STABILIZER</span></div><div class="prow g" style="top:53.83px"><span class="k">TYPE</span><span class="v">SITE</span></div><div class="prow" style="top:77.66px"><span class="k">LOCK</span><span class="v">false</span></div><div class="prow g" style="top:101.49px"><span class="k">OWNER</span><span class="v">/*</span></div><div class="prow" style="top:125.32px"><span class="k">NUMB</span><span class="v">0</span></div><div class="prow g" style="top:149.15px"><span class="k">AREA</span><span class="v">0</span></div><div class="prow" style="top:172.98px"><span class="k">POS</span><span class="v">E 0 N 0 U 1000</span></div><div class="prow g" style="top:196.81px"><span class="k">ORI</span><span class="v">Y is N and Z is U</span></div>
</div>
<div class="sep2"></div><div class="sep2b"></div>
<div class="btn" style="left:394px;width:90px"><div class="focus"></div><b>&lt; <u>Н</u>азад</b></div>
<div class="btn def" style="left:487px;width:91px"><b><u>Д</u>алее &gt;</b></div>
<div class="btn" style="left:594px;width:91px"><b>Отмена</b></div>
<div class="btn" style="left:701px;width:91px"><b>Справка</b></div>
</body></html>
